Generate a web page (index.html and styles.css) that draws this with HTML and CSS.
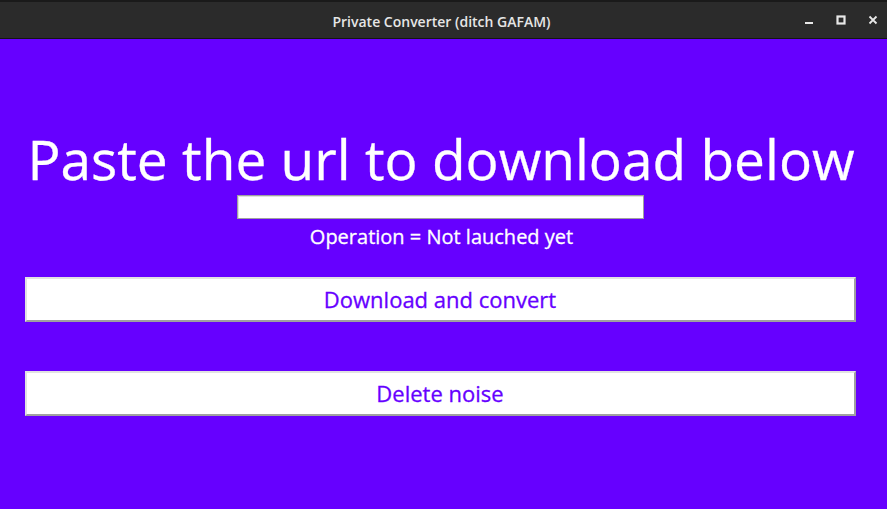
FILE: index.html
```html
<!DOCTYPE html>
<html>
<head>
<meta charset="utf-8">
<link rel="stylesheet" href="styles.css">
</head>
<body>
<div class="window">
  <div class="titlebar">
    <div class="title">Private Converter (ditch GAFAM)</div>
    <div class="controls">
      <span class="ctl"><svg width="10" height="10" viewBox="0 0 10 10"><rect x="1" y="7" width="8" height="2" fill="#e8e8e8"/></svg></span>
      <span class="ctl"><svg width="10" height="10" viewBox="0 0 10 10"><rect x="1.5" y="1.5" width="7" height="7" fill="none" stroke="#e8e8e8" stroke-width="2.2"/></svg></span>
      <span class="ctl"><svg width="10" height="10" viewBox="0 0 10 10"><path d="M1.5 1.5 L8.5 8.5 M8.5 1.5 L1.5 8.5" stroke="#e8e8e8" stroke-width="1.8"/></svg></span>
    </div>
  </div>
  <div class="content">
    <h1 class="heading">Paste the url to download below</h1>
    <input class="url" type="text">
    <div class="status">Operation = Not lauched yet</div>
    <button class="btn first">Download and convert</button>
    <button class="btn second">Delete noise</button>
  </div>
</div>
</body>
</html>
```
FILE: styles.css
```css
html, body {
  margin: 0;
  padding: 0;
  width: 887px;
  height: 509px;
  overflow: hidden;
  background: #6600ff;
}
.window {
  display: flex;
  flex-direction: column;
  height: 509px;
}
.titlebar {
  height: 36px;
  background: #2b2b2b;
  border-top: 2px solid #1a1a1a;
  border-bottom: 1px solid #151515;
  position: relative;
  display: flex;
  align-items: center;
  justify-content: center;
}
.title {
  font-family: "Open Sans", "Noto Sans", sans-serif;
  font-size: 14px;
  font-weight: 600;
  color: #e6e6e6;
  padding-top: 2px;
  margin-left: -4px;
}
.controls {
  position: absolute;
  right: 7px;
  top: 0;
  height: 36px;
  display: flex;
  align-items: center;
  gap: 18px;
}
.ctl {
  display: flex;
  width: 14px;
  justify-content: center;
}
.content {
  flex: 1;
  display: flex;
  flex-direction: column;
  align-items: center;
  font-family: "Open Sans", "Noto Sans", sans-serif;
  padding-top: 85px;
}
.heading {
  margin: 0;
  font-weight: normal;
  font-size: 55px;
  line-height: 70px;
  color: #ffffff;
  margin-left: -5px;
  -webkit-text-stroke: 0.3px #ffffff;
}
.url {
  width: 407px;
  height: 24px;
  box-sizing: border-box;
  border: 1px solid #a0a0a0;
  box-shadow: inset 1px 1px 0 #e0e0e0;
  background: #fff;
  margin: 1px 0 0 -7px;
  padding: 0;
}
.status {
  color: #fff;
  font-size: 20px;
  line-height: 26px;
  margin-top: 5px;
  margin-left: -4px;
  -webkit-text-stroke: 0.3px #ffffff;
}
.btn {
  width: 831px;
  height: 45px;
  box-sizing: border-box;
  background: #fff;
  border-style: solid;
  border-width: 2px;
  border-color: #e2e2e2 #a0a0a0 #a0a0a0 #e2e2e2;
  color: #6600ff;
  font-family: "Open Sans", "Noto Sans", sans-serif;
  font-size: 22px;
  padding: 0 0 2px 0;
  margin-left: -7px;
  -webkit-text-stroke: 0.3px #6600ff;
}
.first {
  margin-top: 27px;
}
.second {
  margin-top: 49px;
}
```
